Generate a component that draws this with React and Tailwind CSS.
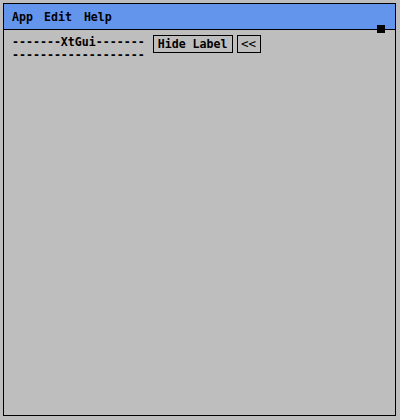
const mono = { fontFamily: '"DejaVu Sans Mono", "Liberation Mono", monospace' };

const App = () => {
  return (
    <div
      className="w-[400px] h-[420px] bg-[#bebebe] pt-[3px] pl-[3px] pr-[4px] pb-[4px] text-black font-bold text-[11.6px]"
      style={mono}
    >
      <div className="relative h-full border border-black flex flex-col">
        {/* Menu bar */}
        <div className="h-[26px] bg-[#6495ed] border-b border-black flex items-center pl-[8px] pt-[2px] leading-[13px]">
          <span>App</span>
          <span className="ml-[11px]">Edit</span>
          <span className="ml-[12px]">Help</span>
        </div>
        <div className="absolute left-[373px] top-[21px] w-[8px] h-[8px] bg-black" />

        {/* Content */}
        <div className="flex items-start pt-[5px] pl-[8px]">
          <div className="whitespace-pre leading-[13px] mt-[1px]">
            {'-------XtGui-------\n-------------------'}
          </div>
          <button className="ml-[8px] w-[80px] h-[18px] border border-black leading-[16px] font-bold">
            Hide Label
          </button>
          <button className="ml-[4px] w-[24px] h-[18px] border border-black leading-[16px] font-normal text-[12.5px]">
            {'<<'}
          </button>
        </div>
      </div>
    </div>
  );
};

export default App;
